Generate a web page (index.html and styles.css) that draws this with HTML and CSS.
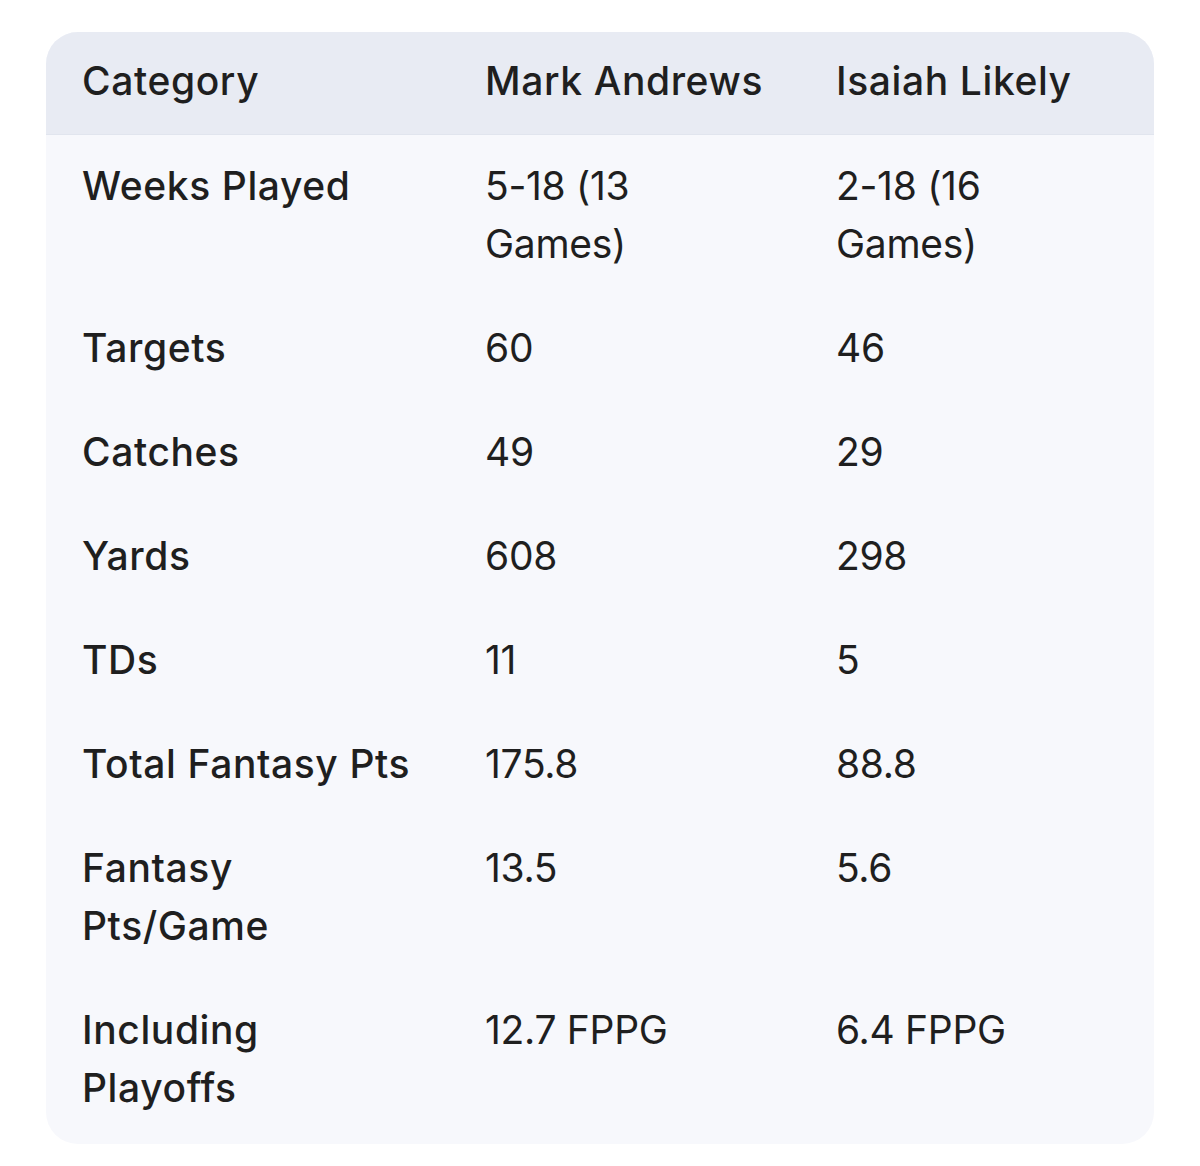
FILE: index.html
```html
<!DOCTYPE html>
<html lang="en">
<head>
<meta charset="utf-8">
<title>Comparison</title>
<link rel="stylesheet" href="styles.css">
</head>
<body>
<div class="wrap">
  <div class="table">
    <div class="row head">
      <div class="cell key">Category</div>
      <div class="cell key">Mark Andrews</div>
      <div class="cell key">Isaiah Likely</div>
    </div>
    <div class="row">
      <div class="cell key">Weeks Played</div>
      <div class="cell">5-18 (13 Games)</div>
      <div class="cell">2-18 (16 Games)</div>
    </div>
    <div class="row">
      <div class="cell key">Targets</div>
      <div class="cell">60</div>
      <div class="cell">46</div>
    </div>
    <div class="row">
      <div class="cell key">Catches</div>
      <div class="cell">49</div>
      <div class="cell">29</div>
    </div>
    <div class="row">
      <div class="cell key">Yards</div>
      <div class="cell">608</div>
      <div class="cell">298</div>
    </div>
    <div class="row">
      <div class="cell key">TDs</div>
      <div class="cell">11</div>
      <div class="cell">5</div>
    </div>
    <div class="row">
      <div class="cell key">Total Fantasy Pts</div>
      <div class="cell">175.8</div>
      <div class="cell">88.8</div>
    </div>
    <div class="row">
      <div class="cell key">Fantasy Pts/Game</div>
      <div class="cell">13.5</div>
      <div class="cell">5.6</div>
    </div>
    <div class="row">
      <div class="cell key">Including Playoffs</div>
      <div class="cell">12.7 FPPG</div>
      <div class="cell">6.4 FPPG</div>
    </div>
  </div>
</div>
</body>
</html>
```
FILE: styles.css
```css
html, body {
  margin: 0;
  padding: 0;
  background: #ffffff;
}
body {
  font-family: Inter, "Noto Sans", sans-serif;
  color: #1f1f1f;
}
.wrap {
  padding: 32px 46px 22px 46px;
}
.table {
  width: 1108px;
  background: #f7f8fc;
  border-radius: 32px;
  overflow: hidden;
  padding-bottom: 3px;
}
.row {
  display: grid;
  grid-template-columns: 403px 351px 354px;
}
.row.head {
  background: #e8ebf3;
  border-bottom: 1px solid #e1e5ee;
}
.cell {
  padding: 22px 36px 24px 36px;
  font-size: 39px;
  line-height: 58px;
  letter-spacing: -0.3px;
  font-weight: 400;
}
.head .cell {
  padding-top: 20px;
  padding-bottom: 24px;
}
.cell.key {
  font-weight: 500;
  letter-spacing: 0.6px;
}
```
